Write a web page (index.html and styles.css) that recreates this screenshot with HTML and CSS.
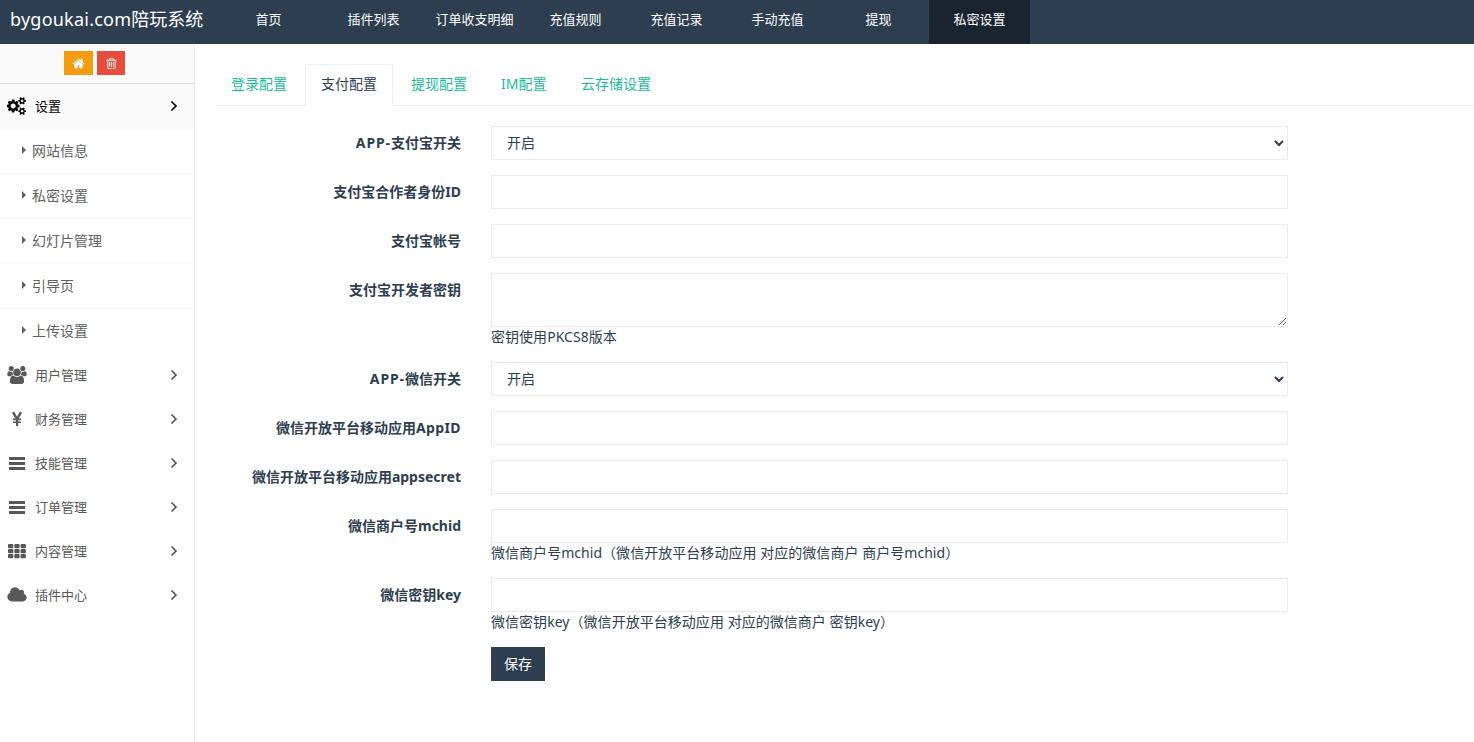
FILE: index.html
```html
<!DOCTYPE html>
<html lang="zh-CN">
<head>
<meta charset="utf-8">
<title>私密设置</title>
<link rel="stylesheet" href="styles.css">
</head>
<body>
<svg class="sprite" width="0" height="0">
  <symbol id="chev" viewBox="0 0 10 12"><path d="M2.4 1.5L7 6L2.4 10.5" fill="none" stroke="currentColor" stroke-width="1.7"/></symbol>
  <symbol id="bars" viewBox="0 0 20 18"><path d="M2 3h16v3H2zM2 8h16v3H2zM2 13h16v3H2z"/></symbol>
</svg>
<header class="topbar">
  <a class="brand"><span class="brand-name">bygoukai.com</span>陪玩系统</a>
  <nav class="topnav">
    <a class="home">首页</a><a>插件列表</a><a>订单收支明细</a><a>充值规则</a><a>充值记录</a><a>手动充值</a><a>提现</a><a class="active">私密设置</a>
  </nav>
</header>
<div class="page">
  <aside class="sidebar">
    <div class="shortcuts">
      <a class="short orange"><svg viewBox="0 0 1792 1792"><path d="M1472 992v480q0 26-19 45t-45 19h-384v-384h-256v384h-384q-26 0-45-19t-19-45v-480q0-1 .5-3t.5-3l575-474 575 474q1 2 1 6zm223-69l-62 74q-8 9-21 11h-3q-13 0-21-7l-692-577-692 577q-12 8-24 7-13-2-21-11l-62-74q-8-10-7-23.5t11-21.5l719-599q32-26 76-26t76 26l244 204v-195q0-14 9-23t23-9h192q14 0 23 9t9 23v408l219 182q10 8 11 21.5t-7 23.5z"/></svg></a>
      <a class="short red"><svg viewBox="0 0 1792 1792"><path d="M704 736v576q0 14-9 23t-23 9h-64q-14 0-23-9t-9-23v-576q0-14 9-23t23-9h64q14 0 23 9t9 23zm256 0v576q0 14-9 23t-23 9h-64q-14 0-23-9t-9-23v-576q0-14 9-23t23-9h64q14 0 23 9t9 23zm256 0v576q0 14-9 23t-23 9h-64q-14 0-23-9t-9-23v-576q0-14 9-23t23-9h64q14 0 23 9t9 23zm128 724v-948h-896v948q0 22 7 40.5t14.5 27 10.5 8.5h832q3 0 10.5-8.5t14.5-27 7-40.5zm-672-1076h448l-48-117q-7-9-17-11h-317q-10 2-17 11zm928 32v64q0 14-9 23t-23 9h-96v948q0 83-47 143.5t-113 60.5h-832q-66 0-113-58.5t-47-141.5v-952h-96q-14 0-23-9t-9-23v-64q0-14 9-23t23-9h309l70-167q15-37 54-63t79-26h320q40 0 79 26t54 63l70 167h309q14 0 23 9t9 23z"/></svg></a>
    </div>
    <a class="item open"><svg class="ico" viewBox="0 0 1920 1792"><path d="M832 896q0-106-75-181t-181-75-181 75-75 181 75 181 181 75 181-75 75-181zm768 512q0-52-38-90t-90-38-90 38-38 90q0 53 37.5 90.5t90.5 37.5 90.5-37.5 37.5-90.5zm0-1024q0-52-38-90t-90-38-90 38-38 90q0 53 37.5 90.5t90.5 37.5 90.5-37.5 37.5-90.5zm-384 421v185q0 10-7 19.5t-16 10.5l-155 24q-11 35-32 76 34 48 90 115 7 11 7 20 0 12-7 19-23 30-82.5 89.5t-78.5 59.5q-11 0-21-7l-115-90q-37 19-77 31-11 108-23 155-7 24-30 24h-186q-11 0-20-7.5t-10-17.5l-23-153q-34-10-75-31l-118 89q-7 7-20 7-11 0-21-8-144-133-144-160 0-9 7-19 10-14 41-53t47-61q-23-44-35-82l-152-24q-10-1-17-9.5t-7-19.5v-185q0-10 7-19.5t16-10.5l155-24q11-35 32-76-34-48-90-115-7-11-7-20 0-12 7-20 22-30 82-89t79-59q11 0 21 7l115 90q34-18 77-32 11-108 23-154 7-24 30-24h186q11 0 20 7.5t10 17.5l23 153q34 10 75 31l118-89q8-7 20-7 11 0 21 8 144 133 144 160 0 8-7 19-12 16-42 54t-45 60q23 48 34 82l152 23q10 2 17 10.5t7 19.5zm640 533v140q0 16-149 31-12 27-30 52 51 113 51 138 0 4-4 7-122 71-124 71-8 0-46-47t-52-68q-20 2-30 2t-30-2q-14 21-52 68t-46 47q-2 0-124-71-4-3-4-7 0-25 51-138-18-25-30-52-149-15-149-31v-140q0-16 149-31 13-29 30-52-51-113-51-138 0-4 4-7 4-2 35-20t59-34 30-16q8 0 46 46.5t52 67.5q20-2 30-2t30 2q51-71 92-112l6-2q4 0 124 70 4 3 4 7 0 25-51 138 17 23 30 52 149 15 149 31zm0-1024v140q0 16-149 31-12 27-30 52 51 113 51 138 0 4-4 7-122 71-124 71-8 0-46-47t-52-68q-20 2-30 2t-30-2q-14 21-52 68t-46 47q-2 0-124-71-4-3-4-7 0-25 51-138-18-25-30-52-149-15-149-31v-140q0-16 149-31 13-29 30-52-51-113-51-138 0-4 4-7 4-2 35-20t59-34 30-16q8 0 46 46.5t52 67.5q20-2 30-2t30 2q51-71 92-112l6-2q4 0 124 70 4 3 4 7 0 25-51 138 17 23 30 52 149 15 149 31z"/></svg><span>设置</span><svg class="chev"><use href="#chev"/></svg></a>
    <div class="submenu">
      <a><i class="caret"></i>网站信息</a>
      <a><i class="caret"></i>私密设置</a>
      <a><i class="caret"></i>幻灯片管理</a>
      <a><i class="caret"></i>引导页</a>
      <a><i class="caret"></i>上传设置</a>
    </div>
    <a class="item"><svg class="ico" viewBox="0 0 1920 1792"><path d="M593 896q-162 5-265 128h-134q-82 0-138-40.5t-56-118.5q0-353 124-353 6 0 43.5 21t97.5 42.5 119 21.5q67 0 133-23-5 37-5 66 0 139 81 256zm1071 637q0 120-73 189.5t-194 69.5h-874q-121 0-194-69.5t-73-189.5q0-53 3.5-103.5t14-109 26.5-108.5 43-97.5 62-81 85.5-53.5 111.5-20q10 0 43 21.5t73 48 107 48 135 21.5 135-21.5 107-48 73-48 43-21.5q61 0 111.5 20t85.5 53.5 62 81 43 97.5 26.5 108.5 14 109 3.5 103.5zm-1024-1277q0 106-75 181t-181 75-181-75-75-181 75-181 181-75 181 75 75 181zm704 384q0 159-112.5 271.5t-271.5 112.5-271.5-112.5-112.5-271.5 112.5-271.5 271.5-112.5 271.5 112.5 112.5 271.5zm576 225q0 78-56 118.5t-138 40.5h-134q-103-123-265-128 81-117 81-256 0-29-5-66 66 23 133 23 59 0 119-21.5t97.5-42.5 43.5-21q124 0 124 353zm-128-609q0 106-75 181t-181 75-181-75-75-181 75-181 181-75 181 75 75 181z"/></svg><span>用户管理</span><svg class="chev"><use href="#chev"/></svg></a>
    <a class="item"><svg class="ico" viewBox="0 0 20 18"><path d="M6 2.2L10 9.2L14 2.2" fill="none" stroke="currentColor" stroke-width="2.4"/><path d="M9 8.5h2.2V16H9zM6 8.6h8v1.6H6zM6 11.4h8V13H6z"/></svg><span>财务管理</span><svg class="chev"><use href="#chev"/></svg></a>
    <a class="item"><svg class="ico"><use href="#bars"/></svg><span>技能管理</span><svg class="chev"><use href="#chev"/></svg></a>
    <a class="item"><svg class="ico"><use href="#bars"/></svg><span>订单管理</span><svg class="chev"><use href="#chev"/></svg></a>
    <a class="item"><svg class="ico" viewBox="0 0 20 18"><rect x="1" y="2" width="5.3" height="4.2" rx="1"/><rect x="7.3" y="2" width="5.3" height="4.2" rx="1"/><rect x="13.6" y="2" width="5.3" height="4.2" rx="1"/><rect x="1" y="7" width="5.3" height="4.2" rx="1"/><rect x="7.3" y="7" width="5.3" height="4.2" rx="1"/><rect x="13.6" y="7" width="5.3" height="4.2" rx="1"/><rect x="1" y="12" width="5.3" height="4.2" rx="1"/><rect x="7.3" y="12" width="5.3" height="4.2" rx="1"/><rect x="13.6" y="12" width="5.3" height="4.2" rx="1"/></svg><span>内容管理</span><svg class="chev"><use href="#chev"/></svg></a>
    <a class="item"><svg class="ico" viewBox="64 0 1920 1792"><path d="M1984 1152q0 159-112.5 271.5t-271.5 112.5h-1088q-185 0-316.5-131.5t-131.5-316.5q0-132 71-241.5t187-163.5q-2-28-2-43 0-212 150-362t362-150q158 0 286.5 88t187.5 230q70-62 166-62 106 0 181 75t75 181q0 75-41 138 129 30 213 134.5t84 239.5z"/></svg><span>插件中心</span><svg class="chev"><use href="#chev"/></svg></a>
  </aside>
  <main class="content">
    <div class="tabs"><a>登录配置</a><a class="active">支付配置</a><a>提现配置</a><a class="im">IM配置</a><a>云存储设置</a></div>
    <form class="form">
      <div class="row"><label><span class="app">APP-</span>支付宝开关</label><div><select class="control"><option>开启</option></select></div></div>
      <div class="row"><label>支付宝合作者身份ID</label><div><input class="control" type="text"></div></div>
      <div class="row"><label>支付宝帐号</label><div><input class="control" type="text"></div></div>
      <div class="row"><label>支付宝开发者密钥</label><div><textarea class="control area"></textarea><p class="help">密钥使用PKCS8版本</p></div></div>
      <div class="row"><label><span class="app">APP-</span>微信开关</label><div><select class="control"><option>开启</option></select></div></div>
      <div class="row"><label>微信开放平台移动应用<span class="appid">AppID</span></label><div><input class="control" type="text"></div></div>
      <div class="row"><label>微信开放平台移动应用appsecret</label><div><input class="control" type="text"></div></div>
      <div class="row"><label>微信商户号mchid</label><div><input class="control" type="text"><p class="help">微信商户号mchid（微信开放平台移动应用 对应的微信商户 商户号mchid）</p></div></div>
      <div class="row"><label>微信密钥key</label><div><input class="control" type="text"><p class="help">微信密钥key（微信开放平台移动应用 对应的微信商户 密钥key）</p></div></div>
      <div class="row"><span></span><div><button class="save" type="button">保存</button></div></div>
    </form>
  </main>
</div>
</body>
</html>
```
FILE: styles.css
```css
* { box-sizing: border-box; }
body {
  margin: 0;
  height: 742px;
  overflow: hidden;
  background: #fff;
  color: #2c3e50;
  font: 14px/20px "Noto Sans", "Noto Sans CJK SC", sans-serif;
}
svg { fill: currentColor; display: block; }
.sprite { position: absolute; }
.topbar { display: flex; height: 44px; background: #2c3e50; color: #fff; }
.brand { width: 218px; padding-left: 10px; font-size: 18px; line-height: 38px; white-space: nowrap; }
.brand-name { letter-spacing: 0.23px; }
.topnav { display: flex; font-size: 13px; line-height: 39px; }
.topnav a { width: 101px; text-align: center; white-space: nowrap; }
.topnav .home { margin-right: 4px; }
.topnav .active { background: #1a242f; }
.page { display: flex; height: 698px; }
.sidebar { width: 195px; flex: none; border-right: 1px solid #ebebeb; color: #585858; }
.shortcuts {
  display: flex; gap: 4px; height: 40px; padding: 7px 0 0 64px;
  background: #fafafa; border-bottom: 1px solid #ddd;
}
.short { display: flex; align-items: center; justify-content: center; height: 24px; color: #fff; }
.short svg { width: 13px; height: 13px; }
.orange { width: 29px; background: #f39c12; }
.red { width: 28px; background: #e74c3c; }
.item { display: flex; align-items: center; height: 44px; padding: 0 15px 0 7px; font-size: 13px; }
.item span { flex: 1; margin-left: 8px; padding-bottom: 1px; }
.ico { width: 20px; height: 18px; }
.chev { width: 10px; height: 12px; }
.open { background: #fafafa; color: #000; }
.submenu a {
  display: flex; align-items: center; height: 45px; padding-left: 22px;
  border-top: 1px solid #fafafa; color: #616161;
}
.caret {
  border: 4px solid transparent; border-left: 4px solid #616161; border-right: 0;
  margin: -3px 6px 0 0;
}
.content { flex: 1; padding: 20px 0 0 20px; }
.tabs { display: flex; gap: 2px; height: 42px; border-bottom: 1px solid #ecf0f1; color: #18bc9c; }
.tabs a { height: 42px; padding: 9px 15px 11px; border: 1px solid transparent; white-space: nowrap; }
.tabs .active { color: #2c3e50; background: #fff; border-color: #ecf0f1 #ecf0f1 #fff; }
.tabs .im { width: 78px; }
.form { display: grid; gap: 15px; padding-top: 20px; }
.row { display: grid; grid-template-columns: 246px 797px; column-gap: 30px; }
.row label { padding-top: 7px; text-align: right; font-weight: 700; white-space: nowrap; }
.app { letter-spacing: 0.9px; }
.appid { letter-spacing: 0.4px; }
.control {
  display: block; width: 100%; height: 34px; padding: 6px 12px;
  border: 1px solid #ecebeb; border-radius: 0; background: #fff; color: #2c3e50; font: inherit;
}
select.control { padding: 5px 11px 7px; }
.area { height: 54px; }
.help { margin: 0; letter-spacing: 0.04px; white-space: nowrap; }
.save { display: block; width: 54px; height: 34px; padding: 0; border: 0; background: #2c3e50; color: #fff; font: inherit; }
```
